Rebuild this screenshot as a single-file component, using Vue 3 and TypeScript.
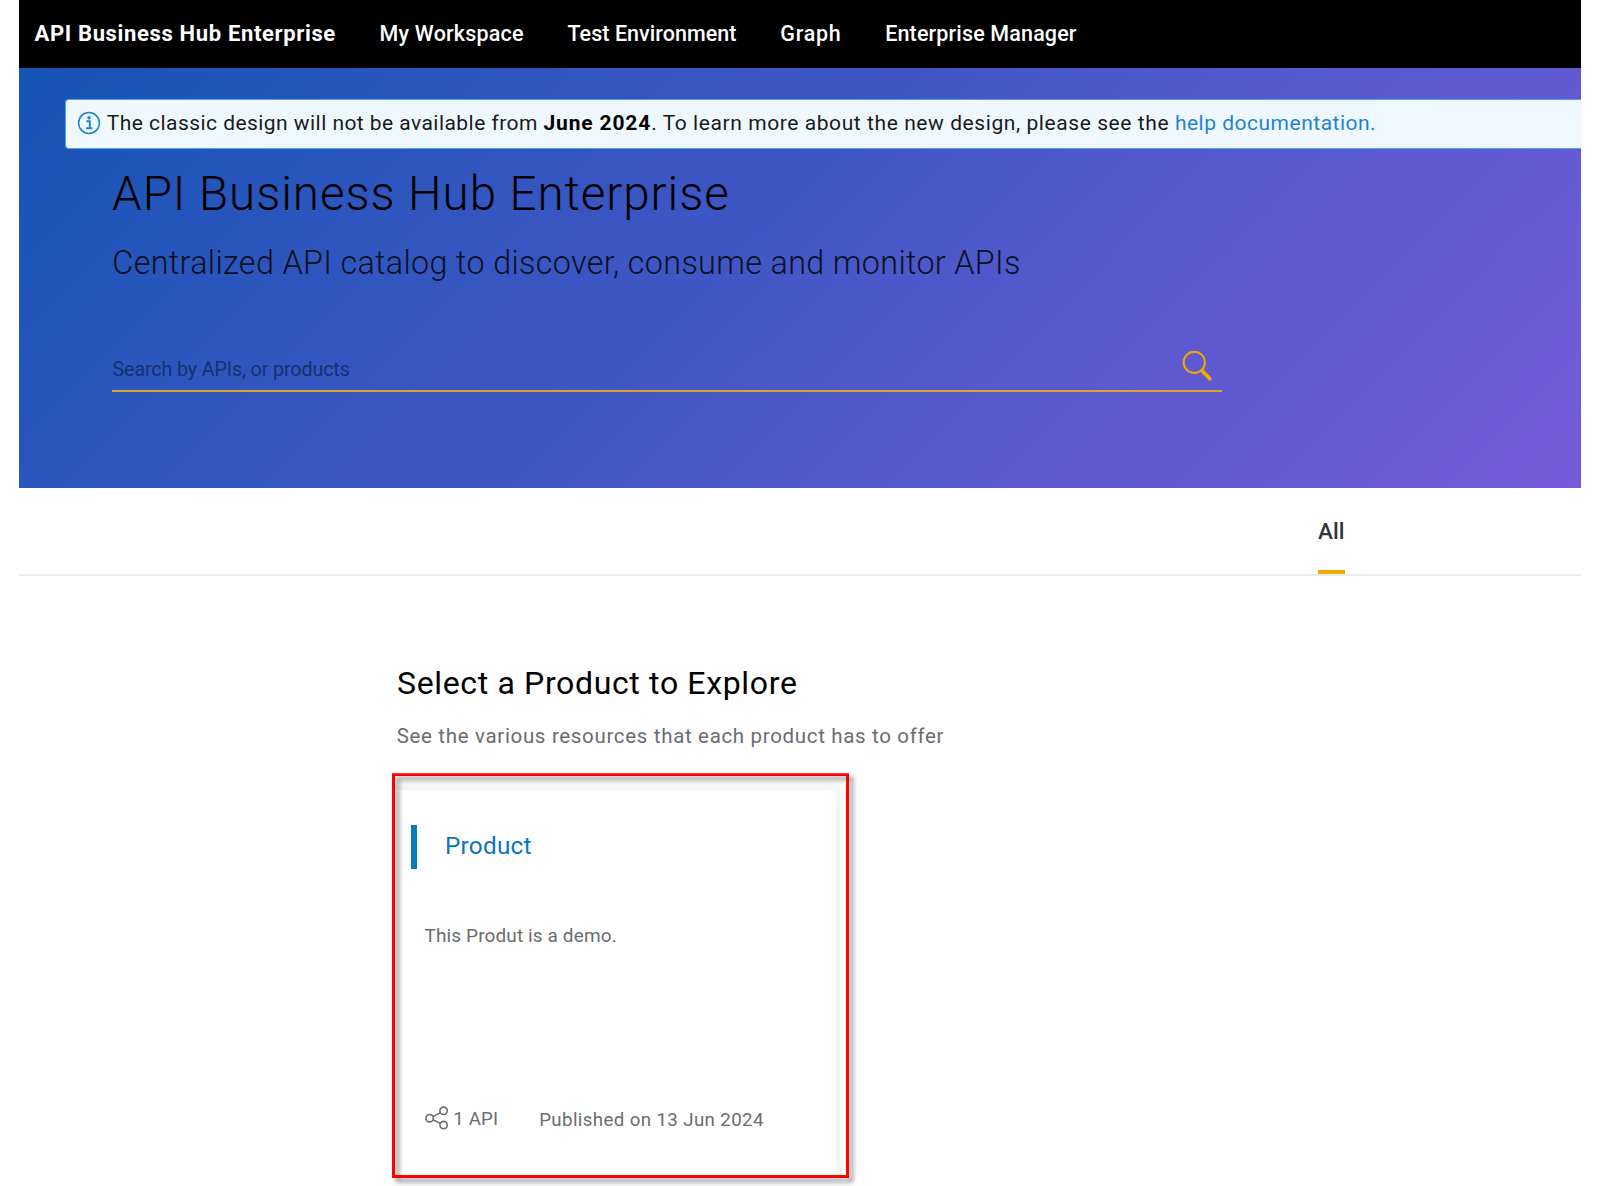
<script setup lang="ts">
interface NavItem {
  label: string
  tracking: number
}

const navItems: NavItem[] = [
  { label: 'My Workspace', tracking: 0.2 },
  { label: 'Test Environment', tracking: 0.05 },
  { label: 'Graph', tracking: 0.75 },
  { label: 'Enterprise Manager', tracking: 0.15 },
]

const product = {
  name: 'Product',
  description: 'This Produt is a demo.',
  apis: '1 API',
  published: 'Published on 13 Jun 2024',
}
</script>

<template>
  <div class="app">
    <header class="shell">
      <span class="brand">API Business Hub Enterprise</span>
      <nav class="nav">
        <a
          v-for="item in navItems"
          :key="item.label"
          class="nav-item"
          :style="{ letterSpacing: item.tracking + 'px' }"
        >{{ item.label }}</a>
      </nav>
    </header>

    <section class="hero">
      <div class="strip">
        <svg class="info" viewBox="0 0 24 24" fill="none">
          <circle cx="12" cy="12" r="10.4" stroke="#1c86c4" stroke-width="1.5" />
          <circle cx="12" cy="6.7" r="1.7" fill="#1c86c4" />
          <path d="M9.4 10.3h3.4v6.9M9 17.2h6.2" stroke="#1c86c4" stroke-width="1.9" />
        </svg>
        <p class="strip-text">The classic design will not be available from <b>June 2024</b><span>. To learn more about the new design, please see the </span><a>help documentation.</a></p>
      </div>
      <h1 class="title">API Business Hub Enterprise</h1>
      <p class="subtitle">Centralized API catalog to discover, consume and monitor APIs</p>
      <div class="search">
        <span class="placeholder">Search by APIs, or products</span>
        <svg class="magnifier" viewBox="0 0 31 32" fill="none" stroke="#f0ab00">
          <circle cx="12.3" cy="12.4" r="10.6" stroke-width="2" />
          <path d="M20 20.6L27.8 28.7" stroke-width="3.7" stroke-linecap="round" />
        </svg>
      </div>
    </section>

    <div class="tabs">
      <span class="tab">All</span>
    </div>

    <main class="content">
      <h2 class="heading">Select a Product to Explore</h2>
      <p class="lead">See the various resources that each product has to offer</p>
      <div class="highlight">
        <article class="card">
          <div class="card-head">
            <span class="accent"></span>
            <a class="name">{{ product.name }}</a>
          </div>
          <p class="description">{{ product.description }}</p>
          <footer class="meta">
            <svg class="share" viewBox="0 0 24 24" fill="none" stroke="#6a6d70" stroke-width="1.6">
              <circle cx="4.6" cy="12.2" r="3.7" />
              <circle cx="18.6" cy="4.8" r="3.7" />
              <circle cx="18.6" cy="19.1" r="3.7" />
              <path d="M7.9 10.6l7.5-4M7.9 13.8l7.5 3.6" />
            </svg>
            <span class="apis">{{ product.apis }}</span>
            <span class="published">{{ product.published }}</span>
          </footer>
        </article>
      </div>
    </main>
  </div>
</template>

<style>
body {
  background: #fff;
}
</style>

<style scoped>
.app {
  box-sizing: border-box;
  width: 1600px;
  height: 1186px;
  padding: 0 19px;
  overflow: hidden;
  font-family: Roboto, 'Noto Sans', sans-serif;
  color: #000;
}

h1,
h2,
p {
  margin: 0;
  font-weight: 400;
  white-space: nowrap;
}

.shell {
  display: flex;
  gap: 43.7px;
  height: 68.3px;
  padding-left: 15.5px;
  background: #000;
  color: #fff;
  line-height: 67px;
  white-space: nowrap;
}

.brand {
  font-size: 22px;
  font-weight: 700;
  letter-spacing: 0.65px;
}

.nav {
  display: flex;
  gap: 43.7px;
  font-size: 21.5px;
  font-weight: 500;
}

.hero {
  box-sizing: border-box;
  height: 419.7px;
  padding-top: 30.7px;
  background: linear-gradient(135deg, #1554b6 0%, #2f56be 26%, #4056c5 45%, #4958c9 53%, #625ad3 79%, #765bdb 100%);
}

.strip {
  box-sizing: border-box;
  display: flex;
  gap: 6.3px;
  height: 50px;
  margin-left: 46px;
  padding: 10px 0 0 10.5px;
  border: 1.5px solid #4ba3f0;
  border-right: 0;
  border-radius: 4px 0 0 4px;
  background: #f0f8ff;
}

.info {
  width: 24px;
  height: 24px;
  margin-top: 1px;
}

.strip-text {
  font-size: 21px;
  line-height: 27px;
  letter-spacing: 0.45px;
  color: #1a1a1a;
}

.strip-text b {
  color: #000;
  letter-spacing: 0.85px;
}

.strip-text span {
  letter-spacing: 0.58px;
}

.strip-text a {
  color: #1f83d3;
  letter-spacing: 0.5px;
}

.title {
  margin: 15.3px 0 0 93px;
  font-size: 47.5px;
  font-weight: 300;
  line-height: 60px;
  letter-spacing: 0.96px;
}

.subtitle {
  margin: 16.3px 0 0 93.3px;
  font-size: 32.35px;
  font-weight: 300;
  line-height: 44px;
  letter-spacing: 0.34px;
  color: #0b1122;
}

.search {
  display: flex;
  justify-content: space-between;
  width: 1110px;
  height: 40px;
  margin: 65.7px 0 0 93px;
  border-bottom: 2px solid #d9a22e;
}

.placeholder {
  padding-left: 0.5px;
  font-size: 19.7px;
  line-height: 39.5px;
  letter-spacing: -0.12px;
  color: #192f71;
}

.magnifier {
  width: 31px;
  height: 32px;
  margin-right: 9.5px;
}

.tabs {
  display: flex;
  justify-content: flex-end;
  height: 86px;
  padding-right: 236.5px;
  border-bottom: 2px solid #eaeaea;
}

.tab {
  box-sizing: border-box;
  width: 26.5px;
  height: 86.5px;
  border-bottom: 4px solid #f0ab00;
  font-size: 22.5px;
  font-weight: 500;
  line-height: 86px;
  color: #32363a;
}

.content {
  padding: 86.8px 0 0 373px;
}

.heading {
  padding-left: 5px;
  font-size: 32px;
  line-height: 40px;
  letter-spacing: 0.65px;
}

.lead {
  margin-top: 19px;
  padding-left: 4.7px;
  font-size: 20.5px;
  line-height: 28px;
  letter-spacing: 0.67px;
  color: #6a6d70;
}

.highlight {
  position: relative;
  box-sizing: border-box;
  width: 457.3px;
  height: 404.3px;
  margin-top: 23.5px;
  padding: 16.3px 12.7px 0 0;
  clip-path: inset(0 -12px -9px 0);
}

/* The annotation frame casts its shadow both outwards and onto the card. */
.highlight::after {
  content: '';
  position: absolute;
  inset: 0;
  border: 3px solid #f00;
  filter: drop-shadow(4px 4px 2.5px rgba(0, 0, 0, 0.48));
}

.card {
  box-sizing: border-box;
  height: 385px;
  padding: 35px 0 0 19px;
  border-radius: 0 4px 0 0;
  background: #fff;
  box-shadow: 0 0 14px rgba(0, 0, 0, 0.1);
}

.card-head {
  display: flex;
  gap: 28px;
  height: 44.7px;
}

.accent {
  width: 6px;
  background: #0a7cba;
}

.name {
  font-size: 24.3px;
  line-height: 41px;
  letter-spacing: 0.25px;
  color: #0a76bd;
}

.description {
  margin: 54.2px 0 0 13.5px;
  font-size: 19px;
  line-height: 26px;
  letter-spacing: 0.12px;
  color: #6a6d70;
}

.meta {
  display: flex;
  align-items: flex-start;
  margin: 157px 0 0 13.5px;
  font-size: 18.7px;
  line-height: 26px;
  color: #6a6d70;
  white-space: nowrap;
}

.share {
  width: 24px;
  height: 24px;
}

.apis {
  width: 81px;
  margin-left: 4.7px;
  letter-spacing: 0.2px;
}

.published {
  padding: 1px 0 0 5px;
  letter-spacing: 0.38px;
}
</style>
